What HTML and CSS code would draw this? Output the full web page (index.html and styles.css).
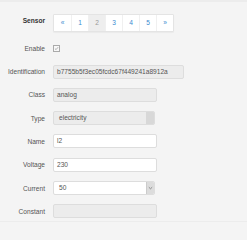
FILE: index.html
```html
<!DOCTYPE html>
<html lang="en">
<head>
    <meta charset="UTF-8">
    <title>Sensor</title>
    <link rel="stylesheet" href="styles.css">
</head>
<body>

    <div class="panel">
        <div class="row row-sensor">
            <span class="label label-strong">Sensor</span>
            <ul class="pager">
                <li><a>&laquo;</a></li>
                <li><a>1</a></li>
                <li class="active"><a>2</a></li>
                <li><a>3</a></li>
                <li><a>4</a></li>
                <li><a>5</a></li>
                <li><a>&raquo;</a></li>
            </ul>
        </div>

        <div class="row">
            <span class="label">Enable</span>
            <span class="check">
                <svg width="7" height="7" viewBox="0 0 7 7"><path d="M1.3 3.6 L2.9 5.1 L5.8 1.6" fill="none" stroke="#888" stroke-width="0.9"/></svg>
            </span>
        </div>

        <div class="row">
            <span class="label">Identification</span>
            <div class="field field-wide disabled">b7755b5f3ec05fcdc67f449241a8912a</div>
        </div>

        <div class="row">
            <span class="label">Class</span>
            <div class="field disabled">analog</div>
        </div>

        <div class="row">
            <span class="label">Type</span>
            <div class="field select disabled">electricity<span class="arrow"></span></div>
        </div>

        <div class="row">
            <span class="label">Name</span>
            <div class="field">l2</div>
        </div>

        <div class="row">
            <span class="label">Voltage</span>
            <div class="field">230</div>
        </div>

        <div class="row">
            <span class="label">Current</span>
            <div class="field select">50<span class="arrow"><svg width="5" height="4" viewBox="0 0 5 4"><path d="M0.8 1.2 L2.5 2.8 L4.2 1.2" fill="none" stroke="#777" stroke-width="0.8"/></svg></span></div>
        </div>

        <div class="row">
            <span class="label">Constant</span>
            <div class="field disabled"></div>
        </div>
    </div>

</body>
</html>
```

FILE: styles.css
```css
* {
    margin: 0;
    padding: 0;
    box-sizing: border-box;
}

body {
    font-family: 'Liberation Sans', Arial, sans-serif;
    font-size: 6.6px;
    color: #555;
    background-color: #f4f4f4;
    height: 240px;
    overflow: hidden;
}

.panel {
    border-top: 2px solid #ececec;
    border-bottom: 1px solid #ececec;
    background-color: #f4f4f4;
    padding: 12px 0 0 0;
    height: 222px;
    display: flex;
    flex-direction: column;
    gap: 9.3px;
}

.row {
    display: flex;
    align-items: center;
    height: 14px;
}

.row-sensor {
    height: 18px;
    align-items: flex-start;
}

.label {
    width: 45px;
    text-align: right;
    margin-right: 8px;
    flex-shrink: 0;
}

.label-strong {
    font-weight: bold;
    color: #333;
    margin-top: 3px;
}

/* paginacao */
.pager {
    list-style: none;
    display: flex;
    background-color: #fff;
    border: 1px solid #e4e4e4;
    border-radius: 1px;
    box-shadow: 0 1px 1px rgba(0, 0, 0, 0.04);
}

.pager li a {
    display: block;
    width: 17px;
    height: 16px;
    line-height: 16px;
    text-align: center;
    color: #3a8bd0;
    border-left: 1px solid #f0f0f0;
}

.pager li:first-child a {
    border-left: none;
}

.pager li.active a {
    background-color: #eee;
    color: #999;
}

.check {
    width: 7px;
    height: 7px;
    border: 1px solid #aaa;
    background: #f8f8f8;
    display: flex;
    align-items: center;
    justify-content: center;
}

.check svg {
    display: block;
}

.field {
    position: relative;
    width: 104px;
    height: 14px;
    line-height: 12px;
    padding: 0 3px;
    background-color: #fff;
    border: 1px solid #ddd;
    border-radius: 2px;
    color: #555;
    white-space: nowrap;
    overflow: hidden;
}

.field-wide {
    width: 131px;
}

.field.disabled {
    background-color: #ececec;
}

.select {
    width: 102px;
    padding-left: 5px;
}

.arrow {
    position: absolute;
    top: 0;
    right: 0;
    width: 8px;
    height: 12px;
    background-color: #dcdcdc;
    border-left: 1px solid #ccc;
    display: flex;
    align-items: center;
    justify-content: center;
}

.disabled .arrow {
    background-color: #d8d8d8;
    border-left: none;
}
```
